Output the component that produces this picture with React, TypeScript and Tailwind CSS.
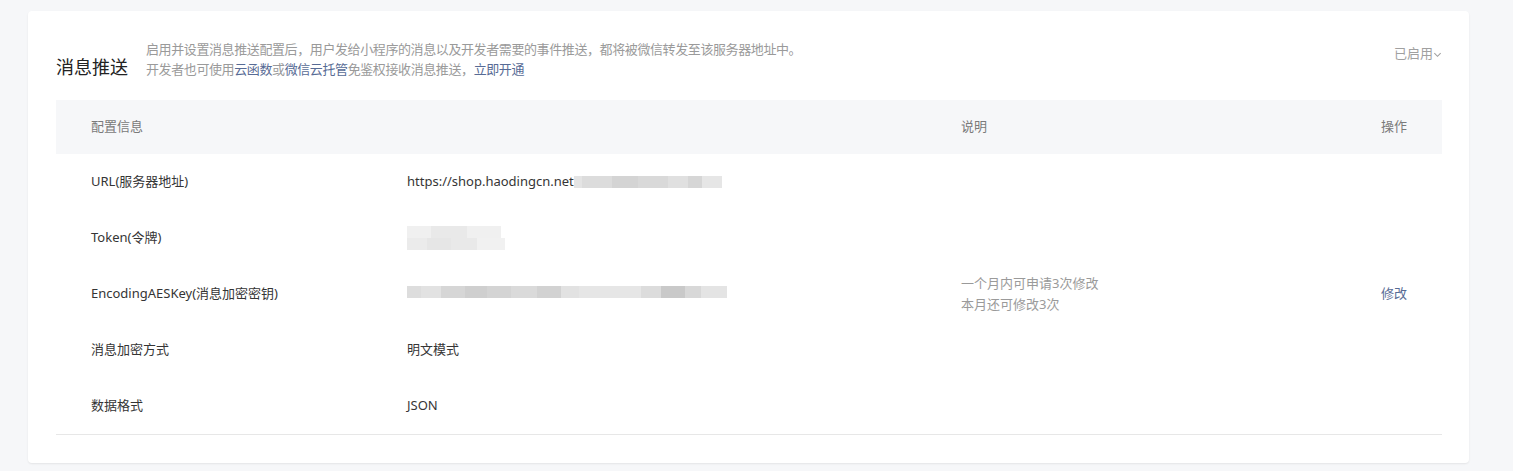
import React from "react";

const font = { fontFamily: '"Noto Sans", "Noto Sans CJK SC", sans-serif' };

function Blur({ blocks }: { blocks: [number, string][] }) {
  return (
    <span className="inline-flex items-center h-[12px]">
      {blocks.map(([w, c], i) => (
        <span key={i} className="h-full inline-block" style={{ width: w, background: c }} />
      ))}
    </span>
  );
}

export default function App() {
  const rows = [
    {
      k: "URL(服务器地址)",
      v: (
        <span className="flex items-center">
          <span>https://shop.haodingcn.net</span>
          <Blur
            blocks={[
              [8, "#e4e4e4"],
              [30, "#dcdcdc"],
              [26, "#d4d4d4"],
              [30, "#d9d9d9"],
              [20, "#e0e0e0"],
              [14, "#d6d6d6"],
              [20, "#e6e6e6"],
            ]}
          />
        </span>
      ),
    },
    {
      k: "Token(令牌)",
      v: (
        <span className="flex flex-col">
          <Blur blocks={[[24, "#f0f0f0"], [36, "#e9e9e9"], [34, "#f0f0f0"]]} />
          <Blur blocks={[[20, "#ebebeb"], [24, "#e6e6e6"], [26, "#e9e9e9"], [28, "#f1f1f1"]]} />
        </span>
      ),
    },
    {
      k: "EncodingAESKey(消息加密密钥)",
      v: (
        <Blur
          blocks={[
            [14, "#dddddd"],
            [20, "#e2e2e2"],
            [24, "#d6d6d6"],
            [22, "#cfcfcf"],
            [24, "#d4d4d4"],
            [26, "#dadada"],
            [24, "#d2d2d2"],
            [18, "#e2e2e2"],
            [62, "#e6e6e6"],
            [20, "#dcdcdc"],
            [24, "#c9c9c9"],
            [16, "#d8d8d8"],
            [26, "#e4e4e4"],
          ]}
        />
      ),
      desc: ["一个月内可申请3次修改", "本月还可修改3次"],
      op: "修改",
    },
    { k: "消息加密方式", v: "明文模式" },
    { k: "数据格式", v: "JSON" },
  ];

  return (
    <div className="min-h-[471px] bg-[#f6f7f9] pl-[28px] pr-[44px] pt-[11px] pb-[8px]" style={font}>
      <div className="bg-white rounded-[4px] shadow-[0_1px_2px_rgba(0,0,0,0.08)] px-[28px] pt-[28px] pb-[28px] w-[1441px]">
        <div className="flex items-start justify-between">
          <div className="flex items-end">
            <div className="text-[18px] leading-[24px] text-[#222] w-[90px]">消息推送</div>
            <div className="text-[13px] leading-[20px] text-[#9a9a9a] whitespace-nowrap tracking-[-0.4px]">
              <div>
                启用并设置消息推送配置后，用户发给小程序的消息以及开发者需要的事件推送，都将被微信转发至该服务器地址中。
              </div>
              <div>
                开发者也可使用<span className="text-[#576b95]">云函数</span>或
                <span className="text-[#576b95]">微信云托管</span>免鉴权接收消息推送，
                <span className="text-[#576b95]">立即开通</span>
              </div>
            </div>
          </div>
          <div className="flex items-center text-[13px] leading-[20px] text-[#a0a0a0] mt-[4px] mr-[-1px]">
            已启用
            <svg width="9" height="9" viewBox="0 0 10 10" className="mt-[2px]">
              <path d="M1.5 3.5 L5 7 L8.5 3.5" fill="none" stroke="#a0a0a0" strokeWidth="1.2" />
            </svg>
          </div>
        </div>

        <div className="mt-[21px] w-[1386px] border-b border-[#e7e7e7] text-[13px]">
          <div className="grid grid-cols-[316px_554px_420px_auto] pl-[35px] h-[54px] items-center bg-[#f6f7f9] text-[#7a7a7a]">
            <div>配置信息</div>
            <div></div>
            <div>说明</div>
            <div>操作</div>
          </div>
          {rows.map((r, i) => (
            <div
              key={i}
              className="grid grid-cols-[316px_554px_420px_auto] pl-[35px] h-[56px] items-center text-[#353535]"
            >
              <div>{r.k}</div>
              <div>{r.v}</div>
              <div className="text-[#9a9a9a] leading-[21px]">
                {r.desc?.map((d) => (
                  <div key={d}>{d}</div>
                ))}
              </div>
              <div className="text-[#576b95]">{r.op}</div>
            </div>
          ))}
        </div>
      </div>
    </div>
  );
}
